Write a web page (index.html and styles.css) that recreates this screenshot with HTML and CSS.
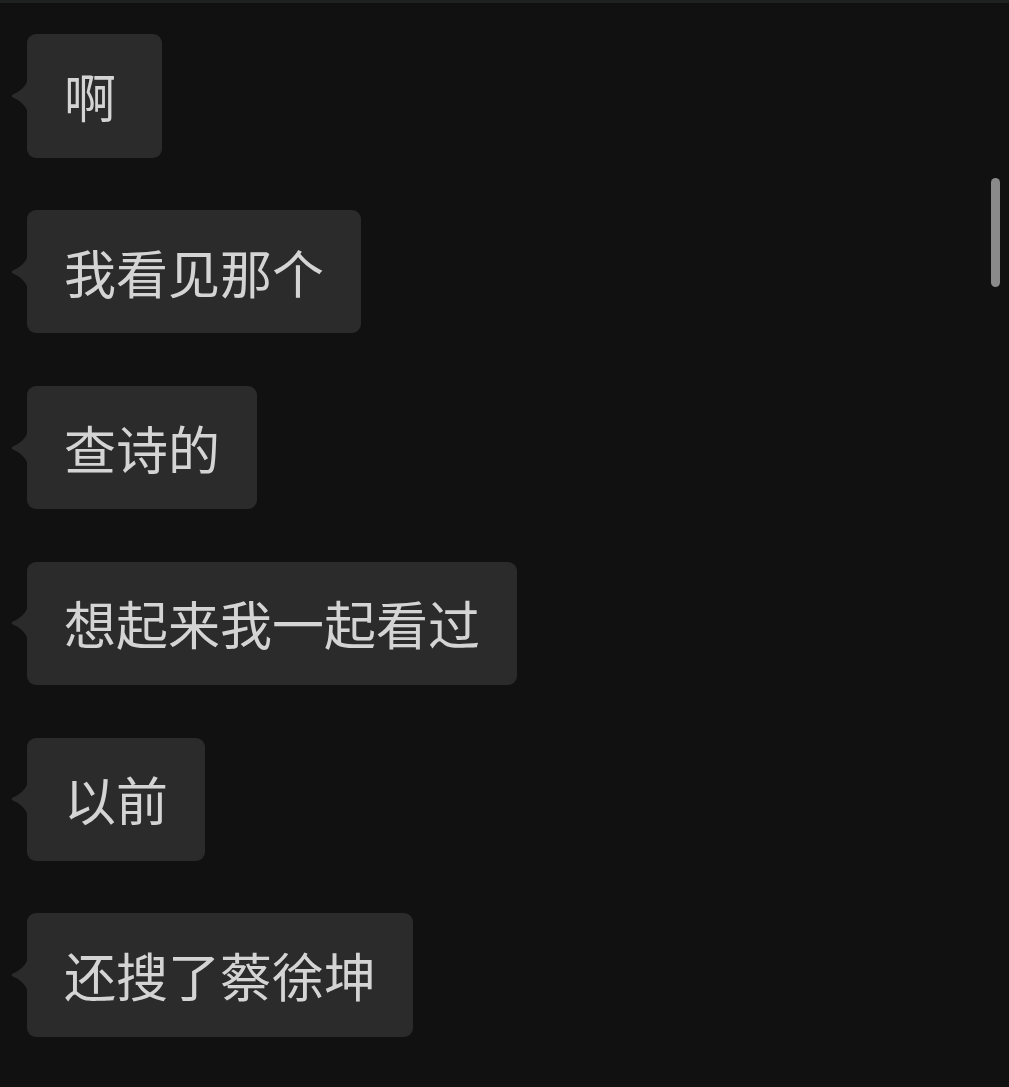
FILE: index.html
```html
<!DOCTYPE html>
<html lang="zh-CN">
<head>
    <meta charset="UTF-8">
    <meta name="viewport" content="width=device-width, initial-scale=1.0">
    <title>聊天</title>
    <link rel="stylesheet" href="styles.css">
</head>

<body>
    <div class="top-bar"></div>
    <div class="chat">
        <div class="bubble bubble-single">
            <svg class="tail" viewBox="0 0 17 32"><path d="M17 0 Q13 10 1 15 Q0 16 1 17 Q13 22 17 32 Z"/></svg>
            啊
        </div>
        <div class="bubble">
            <svg class="tail" viewBox="0 0 17 32"><path d="M17 0 Q13 10 1 15 Q0 16 1 17 Q13 22 17 32 Z"/></svg>
            我看见那个
        </div>
        <div class="bubble">
            <svg class="tail" viewBox="0 0 17 32"><path d="M17 0 Q13 10 1 15 Q0 16 1 17 Q13 22 17 32 Z"/></svg>
            查诗的
        </div>
        <div class="bubble">
            <svg class="tail" viewBox="0 0 17 32"><path d="M17 0 Q13 10 1 15 Q0 16 1 17 Q13 22 17 32 Z"/></svg>
            想起来我一起看过
        </div>
        <div class="bubble">
            <svg class="tail" viewBox="0 0 17 32"><path d="M17 0 Q13 10 1 15 Q0 16 1 17 Q13 22 17 32 Z"/></svg>
            以前
        </div>
        <div class="bubble">
            <svg class="tail" viewBox="0 0 17 32"><path d="M17 0 Q13 10 1 15 Q0 16 1 17 Q13 22 17 32 Z"/></svg>
            还搜了蔡徐坤
        </div>
    </div>
    <div class="scrollbar"></div>
</body>
</html>
```

FILE: styles.css
```css
html, body {
    margin: 0;
    height: 100%;
    background-color: #111111;
    overflow: hidden;
}

body {
    position: relative;
    font-family: "Noto Sans CJK SC", "Noto Sans", sans-serif;
}

.top-bar {
    height: 3px;
    background-color: #1f2120;
}

.chat {
    display: flex;
    flex-direction: column;
    align-items: flex-start;
    gap: 52.4px;
    padding: 31px 0 0 27px;
}

.bubble {
    position: relative;
    display: flex;
    align-items: center;
    height: 123.5px;
    padding: 0 37px;
    box-sizing: border-box;
    background-color: #2b2b2b;
    border-radius: 9px;
    color: #d4d4d4;
    font-size: 52px;
    line-height: 1;
    white-space: nowrap;
}

.bubble-single {
    min-width: 135px;
}

.tail {
    position: absolute;
    left: -16px;
    top: 50%;
    width: 17px;
    height: 32px;
    transform: translateY(-50%);
    fill: #2b2b2b;
}

/* scroll thumb on the right edge */
.scrollbar {
    position: absolute;
    left: 991px;
    top: 178px;
    width: 9px;
    height: 109px;
    border-radius: 5px;
    background-color: #8a8a8a;
}
```
